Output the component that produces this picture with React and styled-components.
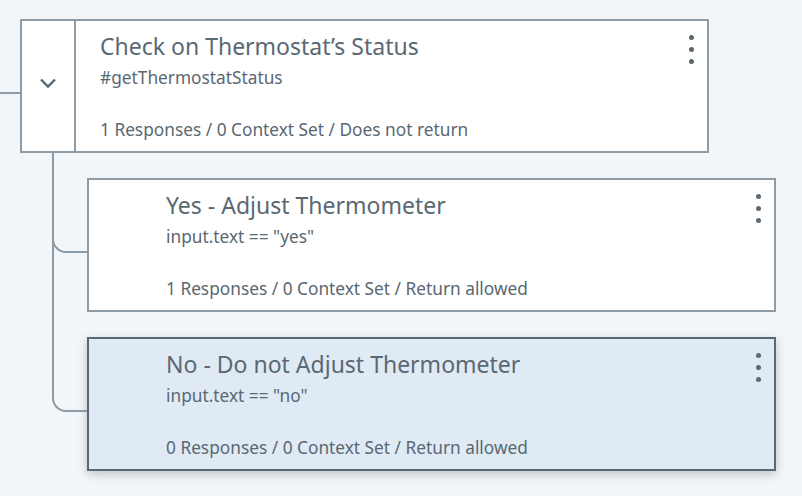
import React from "react";
import styled, { createGlobalStyle } from "styled-components";

const Global = createGlobalStyle`
  html, body { margin: 0; padding: 0; background: #f3f6f9; }
  body { font-family: "Noto Sans", "Open Sans", sans-serif; color: #5a6872; }
`;

const Page = styled.div`
  padding-top: 19px;
  width: 802px;
  height: 496px;
  box-sizing: border-box;
  overflow: hidden;
`;

const RootRow = styled.div`
  display: flex;
  align-items: flex-start;
`;

const Lead = styled.div`
  width: 20px;
  height: 2px;
  margin-top: 73px;
  background: #8c9ba5;
  flex-shrink: 0;
`;

const Card = styled.div`
  box-sizing: border-box;
  display: flex;
  width: ${(p) => p.$w}px;
  height: 134px;
  border: 2px solid ${(p) => (p.$selected ? "#5a6872" : "#8c9ba5")};
  background: ${(p) => (p.$selected ? "#dfeaf5" : "#ffffff")};
  box-shadow: ${(p) => (p.$selected ? "0 3px 9px rgba(60, 75, 90, 0.3)" : "none")};
`;

const Toggle = styled.div`
  width: 54px;
  flex-shrink: 0;
  display: flex;
  align-items: center;
  justify-content: center;
  border-right: 2px solid #8c9ba5;
  padding-bottom: 6px;
  box-sizing: border-box;
`;

const Spacer = styled.div`
  width: 53px;
  flex-shrink: 0;
`;

const Body = styled.div`
  flex: 1;
  display: flex;
  flex-direction: column;
  padding: 9px 0 0 24px;
  min-width: 0;
`;

const Title = styled.div`
  font-size: 23px;
  line-height: 32px;
  color: #5a6872;
  white-space: nowrap;
`;

const Condition = styled.div`
  font-size: 17.3px;
  line-height: 22px;
  margin-top: 5px;
  color: #5a6872;
  white-space: nowrap;
`;

const Meta = styled.div`
  font-size: 17.3px;
  line-height: 22px;
  margin-top: 30px;
  color: #5a6872;
  white-space: nowrap;
`;

const Kebab = styled.div`
  width: 32px;
  flex-shrink: 0;
  display: flex;
  flex-direction: column;
  align-items: center;
  gap: 7px;
  padding-top: 14px;
  box-sizing: border-box;
`;

const Dot = styled.span`
  width: 5px;
  height: 5px;
  border-radius: 50%;
  background: #5a6872;
`;

const ChildList = styled.div`
  display: flex;
  flex-direction: column;
  gap: 25px;
  margin: 25px 0 0 52px;
`;

const ChildRow = styled.div`
  display: flex;
`;

const Connector = styled.div`
  position: relative;
  width: 35px;
  flex-shrink: 0;

  &::before {
    content: "";
    position: absolute;
    left: 0;
    top: -25px;
    width: 100%;
    height: 100px;
    box-sizing: border-box;
    border-left: 2px solid #8c9ba5;
    border-bottom: 2px solid #8c9ba5;
    border-bottom-left-radius: 14px;
  }

  &::after {
    content: "";
    display: ${(p) => (p.$last ? "none" : "block")};
    position: absolute;
    left: 0;
    top: 60px;
    bottom: -25px;
    border-left: 2px solid #8c9ba5;
  }
`;

const Chevron = () => (
  <svg width="18" height="12" viewBox="0 0 18 12" aria-hidden="true">
    <path d="M2 2.5 L9 9.5 L16 2.5" fill="none" stroke="#5a6872" strokeWidth="2.4" />
  </svg>
);

const Menu = () => (
  <Kebab>
    <Dot />
    <Dot />
    <Dot />
  </Kebab>
);

const children = [
  {
    title: "Yes - Adjust Thermometer",
    cond: 'input.text == "yes"',
    meta: "1 Responses / 0 Context Set / Return allowed",
  },
  {
    title: "No - Do not Adjust Thermometer",
    cond: 'input.text == "no"',
    meta: "0 Responses / 0 Context Set / Return allowed",
    selected: true,
  },
];

export default function App() {
  return (
    <>
      <Global />
      <Page>
        <RootRow>
          <Lead />
          <Card $w={689}>
            <Toggle>
              <Chevron />
            </Toggle>
            <Body>
              <Title>Check on Thermostat’s Status</Title>
              <Condition>#getThermostatStatus</Condition>
              <Meta>1 Responses / 0 Context Set / Does not return</Meta>
            </Body>
            <Menu />
          </Card>
        </RootRow>
        <ChildList>
          {children.map((c, i) => (
            <ChildRow key={c.title}>
              <Connector $last={i === children.length - 1} />
              <Card $w={689} $selected={c.selected}>
                <Spacer />
                <Body>
                  <Title>{c.title}</Title>
                  <Condition>{c.cond}</Condition>
                  <Meta>{c.meta}</Meta>
                </Body>
                <Menu />
              </Card>
            </ChildRow>
          ))}
        </ChildList>
      </Page>
    </>
  );
}
